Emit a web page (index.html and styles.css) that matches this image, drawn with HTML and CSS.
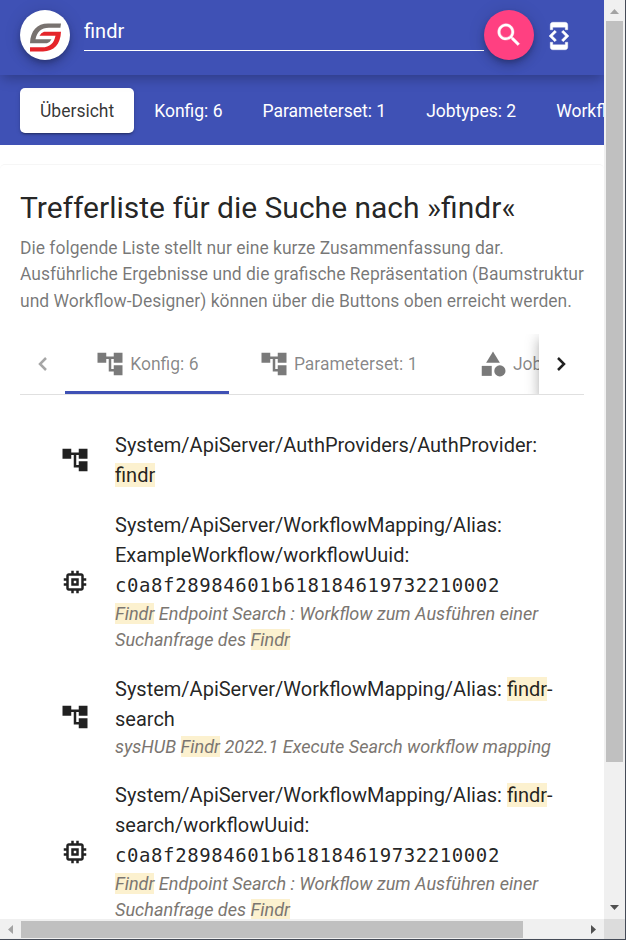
FILE: index.html
```html
<!DOCTYPE html>
<html lang="de">
<head>
<meta charset="utf-8">
<title>findr</title>
<link rel="stylesheet" href="styles.css">
</head>
<body>
<svg class="defs" width="0" height="0">
  <symbol id="tree" viewBox="0 0 24 24"><path d="M22 11V3h-7v3H9V3H2v8h7V8h2v10h4v3h7v-8h-7v3h-2V8h2v3z"/></symbol>
  <symbol id="memory" viewBox="0 0 24 24"><path d="M15 9H9v6h6V9zm-2 4h-2v-2h2v2zm8-2V9h-2V7c0-1.1-.9-2-2-2h-2V3h-2v2h-2V3H9v2H7c-1.1 0-2 .9-2 2v2H3v2h2v2H3v2h2v2c0 1.1.9 2 2 2h2v2h2v-2h2v2h2v-2h2c1.1 0 2-.9 2-2v-2h2v-2h-2v-2h2zm-4 6H7V7h10v10z"/></symbol>
  <symbol id="category" viewBox="0 0 24 24"><path d="M12 2l-5.500 9h11z"/><circle cx="17.5" cy="17.5" r="4.5"/><path d="M3 13.500h8v8H3z"/></symbol>
</svg>
<div class="window">
  <div class="page">
    <header class="topbar">
      <div class="logo">
        <svg viewBox="0 0 50 50" width="50" height="50">
          <path fill="#78726f" d="M41 13.600H28C17 13.600 10.500 21 10 33.300H27Q30 32.500 31.500 29.300H15.500C17 22 21 17.700 29 17.700H40.400z"/>
          <path fill="#e5242a" d="M10 41.400H23C34 41.400 40.500 34 41 21.700H24Q21 22.500 19.500 25.700H35.500C34 33 30 37.300 22 37.300H10z"/>
        </svg>
      </div>
      <div class="field">findr</div>
      <div class="fab"><svg class="icon" viewBox="0 0 24 24"><path stroke="#fff" stroke-width=".3" d="M15.500 14h-.79l-.28-.27C15.410 12.590 16 11.110 16 9.500 16 5.910 13.090 3 9.500 3S3 5.910 3 9.500 5.910 16 9.500 16c1.610 0 3.090-.59 4.230-1.570l.27.28v.79l5 4.990L20.490 19l-4.990-5zm-6 0C7.010 14 5 11.990 5 9.500S7.010 5 9.500 5 14 7.010 14 9.500 11.990 14 9.500 14z"/></svg></div>
      <svg class="icon dev" viewBox="0 0 24 24"><path stroke="#fff" stroke-width=".3" d="M7 5h10v2h2V3c0-1.100-.9-1.990-2-1.990L7 1c-1.100 0-2 .9-2 2v4h2V5zm8.410 11.590L20 12l-4.590-4.590L14 8.830 17.170 12 14 15.170l1.410 1.420zM10 15.170L6.830 12 10 8.830 8.590 7.410 4 12l4.590 4.590L10 15.170zM17 19H7v-2H5v4c0 1.100.9 2 2 2h10c1.100 0 2-.9 2-2v-4h-2v2z"/></svg>
    </header>
    <nav class="nav">
      <a class="active">Übersicht</a><a>Konfig: 6</a><a>Parameterset: 1</a><a>Jobtypes: 2</a><a>Workflows: 4</a>
    </nav>
    <main class="card">
      <h1>Trefferliste für die Suche nach »findr«</h1>
      <p class="intro">Die folgende Liste stellt nur eine kurze Zusammenfassung dar.<br>Ausführliche Ergebnisse und die grafische Repräsentation (Baumstruktur<br>und Workflow-Designer) können über die Buttons oben erreicht werden.</p>
      <div class="tabs">
        <div class="pager prev"><svg viewBox="0 0 9 14" width="9" height="14"><path d="M8 1L2 7l6 6"/></svg></div>
        <div class="strip">
          <div class="tab selected"><svg class="icon"><use href="#tree"/></svg>Konfig: 6</div>
          <div class="tab"><svg class="icon"><use href="#tree"/></svg>Parameterset: 1</div>
          <div class="tab"><svg class="icon"><use href="#category"/></svg>Jobtypes: 2</div>
        </div>
        <div class="pager next"><svg viewBox="0 0 9 14" width="9" height="14"><path d="M1 1l6 6-6 6"/></svg></div>
      </div>
      <ul class="results">
        <li><svg class="icon"><use href="#tree"/></svg>
          <div><div class="path">System/ApiServer/AuthProviders/AuthProvider:<br><mark>findr</mark></div></div></li>
        <li><svg class="icon"><use href="#memory"/></svg>
          <div><div class="path">System/ApiServer/WorkflowMapping/Alias:<br>ExampleWorkflow/workflowUuid:<br><code>c0a8f28984601b618184619732210002</code></div>
          <div class="desc"><mark>Findr</mark> Endpoint Search : Workflow zum Ausführen einer<br>Suchanfrage des <mark>Findr</mark></div></div></li>
        <li><svg class="icon"><use href="#tree"/></svg>
          <div><div class="path">System/ApiServer/WorkflowMapping/Alias: <mark>findr</mark>-<br>search</div>
          <div class="desc">sysHUB <mark>Findr</mark> 2022.1 Execute Search workflow mapping</div></div></li>
        <li><svg class="icon"><use href="#memory"/></svg>
          <div><div class="path">System/ApiServer/WorkflowMapping/Alias: <mark>findr</mark>-<br>search/workflowUuid:<br><code>c0a8f28984601b618184619732210002</code></div>
          <div class="desc"><mark>Findr</mark> Endpoint Search : Workflow zum Ausführen einer<br>Suchanfrage des <mark>Findr</mark></div></div></li>
      </ul>
    </main>
  </div>
  <div class="vbar">
    <svg viewBox="0 0 21 21" width="21" height="21"><path fill="#a3a3a3" d="M6 14h9l-4.500-5z"/></svg>
    <div class="vthumb"></div>
    <svg viewBox="0 0 21 21" width="21" height="21"><path fill="#505050" d="M6 7h9l-4.500 5z"/></svg>
  </div>
  <div class="hbar">
    <svg viewBox="0 0 21 20" width="21" height="20"><path fill="#a3a3a3" d="M13 6v9l-5-4.500z"/></svg>
    <div class="hthumb"></div>
    <svg viewBox="0 0 21 20" width="21" height="20"><path fill="#505050" d="M8 6v9l5-4.500z"/></svg>
  </div>
  <div class="corner"></div>
</div>
</body>
</html>
```
FILE: styles.css
```css
* { box-sizing: border-box; }
body { margin: 0; font-family: Roboto, sans-serif; color: rgba(0,0,0,.87); }
.defs { position: absolute; }
.window {
  width: 626px; height: 940px; overflow: hidden;
  display: grid; grid-template: 919px 20px / 604px 21px;
  border-right: 1px solid #454b57; border-bottom: 1px solid #454b57;
  background: #fff;
}
.page { overflow: hidden; min-width: 0; }
.icon { width: 30px; height: 30px; fill: currentColor; flex: none; display: block; }

.topbar {
  position: relative; height: 75px; display: flex; padding: 10px 20px;
  background: #3f51b5; color: #fff;
  box-shadow: 0 5px 12px -2px rgba(0,0,0,.28);
}
.logo, .fab {
  width: 50px; height: 50px; border-radius: 50%; flex: none;
  box-shadow: 0 3px 5px -1px rgba(0,0,0,.2), 0 6px 10px rgba(0,0,0,.14), 0 1px 18px rgba(0,0,0,.12);
}
.logo { background: #fff; margin-right: 14px; }
.field {
  flex: none; width: 400px; height: 41px; line-height: 42px;
  border-bottom: 1px solid #fff; font-size: 20px;
}
.fab { background: #ff4081; padding: 10px; }
.dev { margin: 11px 0 0 10px; }

.nav { height: 70px; display: flex; padding: 13px 20px 12px; background: #3f51b5; overflow: hidden; }
.nav a {
  flex: none; height: 45px; line-height: 47px; padding: 0 20px;
  font-size: 17.5px; color: #fff; border-radius: 5px;
}
.nav .active {
  background: #fff; color: rgba(0,0,0,.8);
  box-shadow: 0 3px 1px -2px rgba(0,0,0,.2), 0 2px 2px rgba(0,0,0,.14), 0 1px 5px rgba(0,0,0,.12);
}

.card { margin-top: 19px; padding: 23px 20px 20px; border-top: 1px solid #f6f6f6; border-radius: 5px; }
h1 { margin: 0; font-size: 30px; line-height: 40px; font-weight: 400; white-space: nowrap; }
.intro {
  margin: 7px 0 0; font-size: 17.5px; line-height: 26.25px;
  color: rgba(0,0,0,.54); white-space: nowrap;
}

.tabs { display: flex; height: 61px; margin-top: 20.25px; border-bottom: 1px solid #e0e0e0; overflow: hidden; }
.pager { flex: none; width: 45px; display: flex; align-items: center; justify-content: center; background: #fff; }
.pager path { fill: none; stroke: #212121; stroke-width: 2.5; }
.prev path { stroke: #a6a6a6; }
.next { position: relative; box-shadow: 0 5px 5px -3px rgba(0,0,0,.2), 0 8px 10px 1px rgba(0,0,0,.14), 0 3px 14px 2px rgba(0,0,0,.12); }
.strip { flex: 1; min-width: 0; display: flex; overflow: hidden; }
.tab {
  flex: none; display: flex; align-items: center; gap: 5px; padding: 0 30.2px;
  font-size: 17.5px; color: rgba(0,0,0,.48);
}
.tab .icon { color: #7a7a7a; }
.selected { box-shadow: inset 0 -3px #3f51b5; }

.results { list-style: none; margin: 35px 0 0; padding: 0 0 0 40px; display: flex; flex-direction: column; gap: 20px; }
.results li { display: flex; align-items: center; gap: 25px; white-space: nowrap; }
.path { font-size: 20px; line-height: 30px; }
.path code { display: block; height: 31px; font: 19px/30px "DejaVu Sans Mono", monospace; letter-spacing: .59px; }
.desc { font-size: 18.07px; line-height: 26.3px; font-style: italic; color: #7b7671; }
mark { background: #fcf1cf; color: inherit; }

.vbar { background: #f0f0f0; display: flex; flex-direction: column; justify-content: space-between; }
.vbar svg, .hbar svg { display: block; flex: none; }
.vthumb { width: 17px; height: 741px; margin: 0 2px auto; background: #c0c0c0; }
.hbar { background: #f0f0f0; display: flex; justify-content: space-between; }
.hthumb { width: 502px; height: 17px; margin: 2px auto 0 0; background: #c0c0c0; }
.corner { background: #dcdcdc; }
```
